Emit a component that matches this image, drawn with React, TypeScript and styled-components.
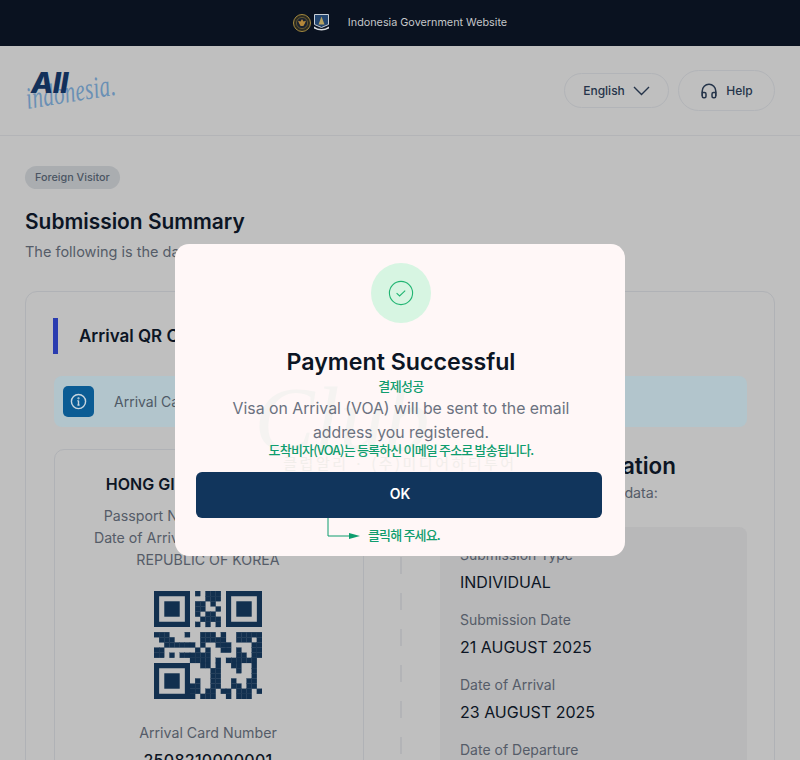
import React from "react";
import styled, { createGlobalStyle } from "styled-components";

const Global = createGlobalStyle`
  html, body { margin: 0; padding: 0; background: #bfbfbf; }
  body { font-family: Inter, "Noto Sans CJK KR", sans-serif; width: 800px; height: 760px; overflow: hidden; }
  #root { width: 800px; height: 760px; overflow: hidden; position: relative; }
  * { box-sizing: border-box; }
`;

const Page = styled.div`
  width: 800px;
  height: 760px;
  overflow: hidden;
  position: relative;
  background: #bfbfbf;
`;
const TopBar = styled.div`
  height: 46px;
  background: #0a1220;
  display: flex;
  align-items: center;
  justify-content: center;
  gap: 18px;
  color: #c4c6c9;
  font-size: 10.8px;
  padding: 0 0 1px 0;
`;
const Emblems = styled.div`
  display: flex;
  align-items: center;
  gap: 2px;
`;
const Header = styled.header`
  height: 90px;
  border-bottom: 1px solid #b3b4b7;
  display: flex;
  align-items: center;
  justify-content: space-between;
  padding: 0 25px 0 25px;
`;
const Logo = styled.div`
  position: relative;
  width: 96px;
  height: 40px;
`;
const LogoAll = styled.span`
  position: absolute;
  left: 6px;
  top: -5px;
  font-size: 29px;
  line-height: 34px;
  font-weight: 800;
  font-style: italic;
  letter-spacing: -0.6px;
  color: #12305a;
`;
const LogoScript = styled.span`
  position: absolute;
  left: 1px;
  top: 13px;
  font-family: "Liberation Serif", serif;
  font-size: 31px;
  line-height: 30px;
  font-style: italic;
  letter-spacing: 0.5px;
  color: #6a90b5;
  transform: rotate(-9deg) scaleX(0.68);
  transform-origin: left center;
`;
const Actions = styled.div`
  display: flex;
  align-items: center;
  gap: 9px;
`;
const Pill = styled.div<{ $h: number; $w: number }>`
  height: ${(p) => p.$h}px;
  width: ${(p) => p.$w}px;
  border: 1px solid #b2b4b8;
  border-radius: ${(p) => p.$h / 2}px;
  display: flex;
  align-items: center;
  justify-content: center;
  gap: 8px;
  font-size: 12px;
  font-weight: 500;
  color: #25344a;
`;
const Main = styled.main`
  padding: 30px 25px 0;
`;
const Badge = styled.div`
  display: flex;
  width: fit-content;
  align-items: center;
  height: 23px;
  padding: 0 10px;
  border-radius: 12px;
  background: #aaadb0;
  color: #4b5563;
  font-size: 10.8px;
  font-weight: 500;
`;
const Title = styled.h1`
  margin: 19px 0 0;
  font-size: 20.9px;
  line-height: 28px;
  font-weight: 600;
  color: #0c1524;
`;
const Sub = styled.p`
  margin: 6px 0 0;
  font-size: 14.5px;
  line-height: 20px;
  color: #555c68;
`;
const Card = styled.section`
  margin-top: 29px;
  width: 750px;
  height: 520px;
  border: 1.5px solid #b0b2b6;
  border-radius: 12px;
  padding: 26px 27px 0 28px;
`;
const SectionHead = styled.div`
  display: flex;
  align-items: center;
  gap: 21px;
  height: 36px;
  margin-left: -1px;
`;
const Accent = styled.div`
  width: 5px;
  height: 36px;
  background: #2a3cb0;
`;
const SectionTitle = styled.h2`
  margin: 0;
  font-size: 17px;
  font-weight: 600;
  color: #0c1524;
`;
const InfoBar = styled.div`
  margin-top: 22px;
  height: 51px;
  width: 693px;
  border-radius: 8px;
  background: #b2c5cc;
  display: flex;
  align-items: center;
  gap: 20px;
  padding-left: 9px;
  font-size: 14px;
  color: #4f5a66;
`;
const InfoIcon = styled.div`
  width: 31px;
  height: 31px;
  border-radius: 5px;
  background: #0b5c94;
  display: flex;
  align-items: center;
  justify-content: center;
`;
const Columns = styled.div`
  margin-top: 22px;
  display: flex;
  align-items: flex-start;
`;
const PassCard = styled.div`
  width: 310px;
  height: 360px;
  flex: none;
  border: 1.5px solid #b0b2b6;
  border-radius: 10px;
  display: flex;
  flex-direction: column;
  align-items: center;
  padding: 23px 2px 0 0;
  color: #555c68;
  font-size: 14.2px;
  line-height: 22px;
  white-space: nowrap;
`;
const PassName = styled.div`
  font-size: 16px;
  font-weight: 600;
  color: #0c1524;
  margin-bottom: 10px;
`;
const QrBox = styled.div`
  margin: 20px 0 23px;
`;
const PassNumber = styled.div`
  margin-top: 5px;
  font-size: 16px;
  font-weight: 500;
  letter-spacing: 0.3px;
  color: #0c1524;
`;
const Dash = styled.div`
  width: 2px;
  height: 330px;
  flex: none;
  margin: 0 38px 0 36px;
  background: repeating-linear-gradient(to bottom, #b3b4b7 0 17px, transparent 17px 36px);
`;
const SideCol = styled.div`
  width: 307px;
  flex: none;
`;
const SideTitle = styled.h3`
  margin: 3px 0 0;
  font-size: 22.4px;
  line-height: 28px;
  font-weight: 600;
  white-space: nowrap;
  color: #0c1524;
`;
const SideSub = styled.p`
  margin: 3px 0 0;
  font-size: 14.25px;
  line-height: 20px;
  color: #555c68;
`;
const Panel = styled.div`
  margin-top: 24px;
  height: 300px;
  background: #b8b8b9;
  border-radius: 8px;
  padding: 18px 20px;
`;
const FieldLabel = styled.div`
  font-size: 14px;
  line-height: 20px;
  color: #555c68;
`;
const FieldValue = styled.div`
  margin: 5px 0 16px;
  font-size: 16px;
  line-height: 24px;
  color: #0c1524;
  white-space: nowrap;
`;

const Modal = styled.div`
  position: absolute;
  left: 175px;
  top: 244px;
  width: 450px;
  height: 312px;
  border-radius: 14px;
  background: #fff7f7;
  overflow: hidden;
`;
const ModalBody = styled.div`
  position: relative;
  z-index: 1;
  display: flex;
  flex-direction: column;
  align-items: center;
  padding: 19px 20px 0 22px;
`;
const CheckDisc = styled.div`
  width: 60px;
  height: 60px;
  border-radius: 50%;
  background: #d7f5e2;
  display: flex;
  align-items: center;
  justify-content: center;
`;
const ModalTitle = styled.h2`
  margin: 24px 0 0;
  font-size: 23.2px;
  line-height: 31px;
  font-weight: 600;
  color: #0c1524;
`;
const Note = styled.div<{ $track: number; $size: number }>`
  font-family: "Noto Sans CJK KR", sans-serif;
  font-weight: 500;
  color: #0f9d6e;
  font-size: ${(p) => p.$size}px;
  letter-spacing: ${(p) => p.$track}px;
  line-height: 16px;
  white-space: nowrap;
`;
const ModalText = styled.p`
  margin: 3px 0 -3px;
  width: 400px;
  text-align: center;
  font-size: 15.8px;
  line-height: 24px;
  color: #6b7280;
`;
const OkButton = styled.button`
  margin: 14px 0 0 -1px;
  align-self: flex-start;
  width: 406px;
  height: 46px;
  flex: none;
  border: 0;
  padding: 0 0 3px 2px;
  border-radius: 6px;
  background: #11355c;
  color: #fff;
  font-family: Inter, sans-serif;
  font-size: 14px;
  font-weight: 600;
`;
const Watermark = styled.div`
  position: absolute;
  z-index: 0;
  left: 0;
  right: 0;
  top: 134px;
  text-align: center;
  pointer-events: none;
`;
const WatermarkScript = styled.div`
  font-family: "Liberation Serif", serif;
  font-style: italic;
  font-size: 90px;
  line-height: 84px;
  margin-left: -116px;
  color: #f5f3f1;
`;
const WatermarkLine = styled.div`
  font-family: "Noto Sans CJK KR", sans-serif;
  font-size: 15px;
  line-height: 18px;
  letter-spacing: 2.5px;
  margin-top: -8px;
  color: #f2eeeb;
`;
const Hint = styled.div`
  position: absolute;
  z-index: 2;
  left: 152px;
  top: 274px;
  display: flex;
  align-items: flex-start;
  gap: 8px;
`;
const HintText = styled(Note)`
  margin-top: 9px;
`;

const QR: string[] = [
  "000000001011100000000",
  "000000000011100000000",
  "000000001101000000000",
  "000000001100100000000",
  "000000001011000000000",
  "000000000111100000000",
  "000000001010100000000",
  "000000000000000000000",
  "111000100111010011111",
  "011100000111110011101",
  "001111110100111000011",
  "110000001010011010011",
  "110101111110000011011",
  "000000011110101111110",
  "000000000110100110010",
  "000000000001100010010",
  "000000000001100000010",
  "000000001001100100110",
  "000000011001100110110",
  "000000011011011011101",
  "000000010111001011100",
];

function QrCode() {
  const u = 108 / 21;
  const cells: React.ReactNode[] = [];
  QR.forEach((row, y) =>
    row.split("").forEach((c, x) => {
      if (c === "1")
        cells.push(<rect key={`${x}-${y}`} x={x * u} y={y * u} width={u} height={u} stroke="#12304f" strokeWidth="0.2" />);
    })
  );
  const finder = (fx: number, fy: number) => (
    <g key={`${fx}-${fy}`}>
      <path
        fillRule="evenodd"
        d={`M${fx} ${fy}h${7 * u}v${7 * u}h${-7 * u}zM${fx + u} ${fy + u}v${5 * u}h${5 * u}v${-5 * u}z`}
      />
      <rect x={fx + 2 * u} y={fy + 2 * u} width={3 * u} height={3 * u} />
    </g>
  );
  return (
    <svg width="108" height="108" viewBox="0 0 108 108" fill="#12304f" style={{ display: "block" }}>
      {cells}
      {finder(0, 0)}
      {finder(14 * u, 0)}
      {finder(0, 14 * u)}
    </svg>
  );
}

const GarudaEmblem = () => (
  <svg width="18" height="18" viewBox="0 0 18 18">
    <circle cx="9" cy="9" r="8.5" fill="#2b2a22" stroke="#a58a3e" strokeWidth="1" />
    <circle cx="9" cy="9" r="5.6" fill="#1a2230" stroke="#6d5f35" strokeWidth="0.8" />
    <path d="M9 5l1.5 2.4 2.5-.6-1.3 3-1.3 2.2H7.6L6.3 9.8 5 6.8l2.5.6z" fill="#b5873a" />
  </svg>
);
const ShieldEmblem = () => (
  <svg width="17" height="19" viewBox="0 0 17 19">
    <path d="M1.5 1.5h14v10l-7 3-7-3z" fill="#23456f" stroke="#c9cfd6" strokeWidth="1" />
    <path d="M8.5 3.5l3 8h-6z" fill="#b8a462" />
    <path d="M1 13.5q7.5 5 15 0v2q-7.5 4-15 0z" fill="#d8dde2" />
  </svg>
);

export default function App() {
  return (
    <Page>
      <Global />
      <TopBar>
        <Emblems>
          <GarudaEmblem />
          <ShieldEmblem />
        </Emblems>
        <span>Indonesia Government Website</span>
      </TopBar>
      <Header>
        <Logo>
          <LogoScript>indonesia.</LogoScript>
          <LogoAll>All</LogoAll>
        </Logo>
        <Actions>
          <Pill $h={35} $w={105}>
            English
            <svg width="17" height="10" viewBox="0 0 17 10" fill="none" stroke="#25344a" strokeWidth="1.4">
              <path d="M1 1l7.5 7.5L16 1" />
            </svg>
          </Pill>
          <Pill $h={41} $w={97}>
            <svg width="18" height="18" viewBox="0 0 24 24" fill="none" stroke="#25344a" strokeWidth="2" strokeLinecap="round">
              <path d="M3 18v-6a9 9 0 0 1 18 0v6" />
              <path d="M21 16v3a2 2 0 0 1-2 2h-1a2 2 0 0 1-2-2v-3a2 2 0 0 1 2-2h3zM3 16v3a2 2 0 0 0 2 2h1a2 2 0 0 0 2-2v-3a2 2 0 0 0-2-2H3z" />
            </svg>
            Help
          </Pill>
        </Actions>
      </Header>
      <Main>
        <Badge>Foreign Visitor</Badge>
        <Title>Submission Summary</Title>
        <Sub>The following is the data you have submitted.</Sub>
        <Card>
          <SectionHead>
            <Accent />
            <SectionTitle>Arrival QR Code</SectionTitle>
          </SectionHead>
          <InfoBar>
            <InfoIcon>
              <svg width="17" height="17" viewBox="0 0 24 24" fill="none" stroke="#c9d6df" strokeWidth="2">
                <circle cx="12" cy="12" r="10" />
                <path d="M12 11v6M10.5 11H12M10.5 17h3" />
                <circle cx="12" cy="7.5" r="0.6" />
              </svg>
            </InfoIcon>
            Arrival Card has been issued successfully.
          </InfoBar>
          <Columns>
            <PassCard>
              <PassName>HONG GIL DONG MIN SOO</PassName>
              <div>Passport Number : M12345678</div>
              <div>Date of Arrival : 23 AUGUST 2025</div>
              <div>REPUBLIC OF KOREA</div>
              <QrBox>
                <QrCode />
              </QrBox>
              <div>Arrival Card Number</div>
              <PassNumber>2508210000001</PassNumber>
            </PassCard>
            <Dash />
            <SideCol>
              <SideTitle>Submitter Information</SideTitle>
              <SideSub>Here is all your submission data:</SideSub>
              <Panel>
                <FieldLabel>Submission Type</FieldLabel>
                <FieldValue>INDIVIDUAL</FieldValue>
                <FieldLabel>Submission Date</FieldLabel>
                <FieldValue>21 AUGUST 2025</FieldValue>
                <FieldLabel>Date of Arrival</FieldLabel>
                <FieldValue>23 AUGUST 2025</FieldValue>
                <FieldLabel>Date of Departure</FieldLabel>
              </Panel>
            </SideCol>
          </Columns>
        </Card>
      </Main>
      <Modal>
        <Watermark>
          <WatermarkScript>Club</WatermarkScript>
          <WatermarkLine>클럽알리 · (주)미디어하티투어</WatermarkLine>
        </Watermark>
        <ModalBody>
          <CheckDisc>
            <svg width="26" height="26" viewBox="0 0 26 26" fill="none" stroke="#22b573" strokeWidth="1.1">
              <circle cx="13" cy="13" r="11.6" />
              <path d="M8.6 13.2l3 2.8 5.6-5.4" />
            </svg>
          </CheckDisc>
          <ModalTitle>Payment Successful</ModalTitle>
          <Note $size={13} $track={-0.6}>결제성공</Note>
          <ModalText>Visa on Arrival (VOA) will be sent to the email address you registered.</ModalText>
          <Note $size={13} $track={-0.82}>도착비자(VOA)는 등록하신 이메일 주소로 발송됩니다.</Note>
          <OkButton>OK</OkButton>
        </ModalBody>
        <Hint>
          <svg width="33" height="22" viewBox="0 0 33 22" fill="none" style={{ display: "block" }}>
            <path d="M1 0v18h24" stroke="#0f9d6e" strokeWidth="1" />
            <path d="M22 15l11 3-11 3z" fill="#0f9d6e" />
          </svg>
          <HintText $size={13} $track={-0.85}>클릭해 주세요.</HintText>
        </Hint>
      </Modal>
    </Page>
  );
}
